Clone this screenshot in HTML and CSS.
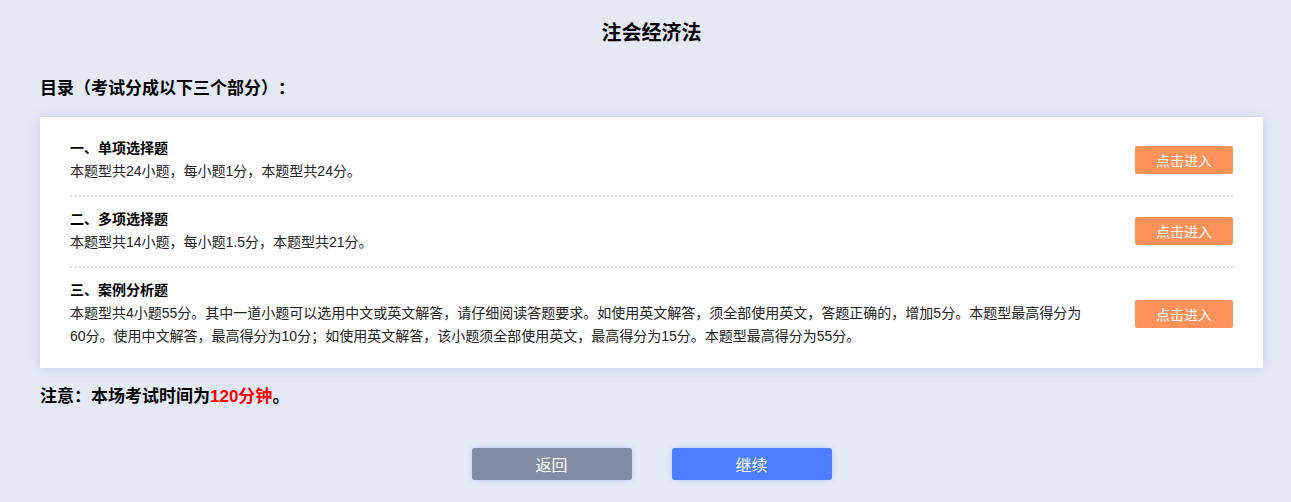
FILE: index.html
```html
<!DOCTYPE html>
<html lang="zh-CN">
<head>
    <meta charset="UTF-8">
    <meta name="viewport" content="width=device-width, initial-scale=1.0">
    <title>注会经济法</title>
    <link rel="stylesheet" href="styles.css">
</head>
<body>
    <div class="page">
        <h1 class="title">注会经济法</h1>

        <div class="menu-title">目录（考试分成以下三个部分）：</div>

        <div class="card">
            <div class="part">
                <div class="part-info">
                    <div class="part-name">一、单项选择题</div>
                    <div class="part-desc">本题型共24小题，每小题1分，本题型共24分。</div>
                </div>
                <button class="enter">点击进入</button>
            </div>
            <div class="part">
                <div class="part-info">
                    <div class="part-name">二、多项选择题</div>
                    <div class="part-desc">本题型共14小题，每小题1.5分，本题型共21分。</div>
                </div>
                <button class="enter">点击进入</button>
            </div>
            <div class="part">
                <div class="part-info">
                    <div class="part-name">三、案例分析题</div>
                    <div class="part-desc">本题型共4小题55分。其中一道小题可以选用中文或英文解答，请仔细阅读答题要求。如使用英文解答，须全部使用英文，答题正确的，增加5分。本题型最高得分为60分。使用中文解答，最高得分为10分；如使用英文解答，该小题须全部使用英文，最高得分为15分。本题型最高得分为55分。</div>
                </div>
                <button class="enter">点击进入</button>
            </div>
        </div>

        <div class="notice">注意：本场考试时间为<span class="red">120分钟</span>。</div>

        <div class="actions">
            <button class="btn back">返回</button>
            <button class="btn next">继续</button>
        </div>
    </div>
</body>
</html>
```

FILE: styles.css
```css
* {
    padding: 0;
    margin: 0;
    box-sizing: border-box;
}

html, body {
    height: 100%;
    background-color: #e5e8f5;
    font-family: "Liberation Sans", "Noto Sans CJK SC", sans-serif;
    color: #000;
    text-spacing-trim: space-all;
}

.page {
    padding: 20px 28px 0 40px;
}

.title {
    text-align: center;
    font-size: 20px;
    line-height: 26px;
    font-weight: bold;
}

.menu-title {
    margin-top: 31px;
    font-size: 17px;
    line-height: 24px;
    font-weight: bold;
}

.card {
    margin-top: 16px;
    background-color: #fff;
    padding: 9px 30px 8px 30px;
    box-shadow: 0 0 10px rgba(170, 182, 220, 0.55);
}

.part {
    display: flex;
    align-items: center;
    padding: 11px 0 12px 0;
    border-bottom: 2px dotted #dcdcdc;
}

.part:last-child {
    border-bottom: none;
}

.part-info {
    flex: 1;
    padding-right: 45px;
}

.part-name {
    font-size: 14px;
    line-height: 23px;
    font-weight: bold;
}

.part-desc {
    font-size: 14px;
    line-height: 23px;
    color: #222;
}

.enter {
    width: 98px;
    height: 28px;
    background-color: #ff915a;
    border: none;
    border-radius: 2px;
    color: #fff;
    font-family: inherit;
    font-size: 14px;
    cursor: pointer;
}

.notice {
    margin-top: 17px;
    font-size: 17px;
    line-height: 24px;
    font-weight: bold;
}

.red {
    color: #ff0000;
}

.actions {
    display: flex;
    justify-content: center;
    gap: 40px;
    margin-top: 39px;
}

.btn {
    width: 160px;
    height: 32px;
    border: none;
    border-radius: 3px;
    color: #fff;
    font-family: inherit;
    font-size: 16px;
    cursor: pointer;
    box-shadow: 0 0 4px rgba(110, 140, 255, 0.35);
}

.back {
    background-color: #828ca3;
}

.next {
    background-color: #4a7eff;
}
```
